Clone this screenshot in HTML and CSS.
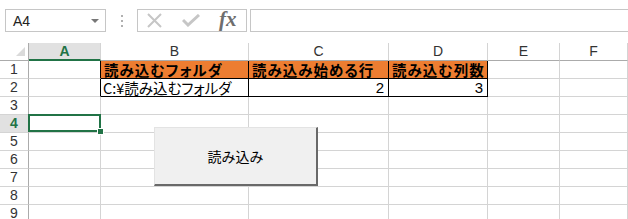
FILE: index.html
```html
<!DOCTYPE html>
<html>

<head>
    <title>Book1 - Excel</title>
    <meta name="viewport" content="width=device-width, initial-scale=1.0">
    <link rel="stylesheet" href="styles.css">
</head>

<body>
    <div class="toolbar">
        <div class="namebox">
            <span class="ref">A4</span>
            <span class="arrow"></span>
        </div>
        <div class="dots"><i></i><i></i><i></i></div>
        <div class="fxbox">
            <svg class="icon" width="17" height="15" viewBox="0 0 17 15">
                <path d="M2 1 L15 14 M15 1 L2 14" stroke="#c6c6c6" stroke-width="2" fill="none" />
            </svg>
            <svg class="icon" width="18" height="13" viewBox="0 0 18 13">
                <path d="M1 6 L6 11 L17 1" stroke="#c6c6c6" stroke-width="3" fill="none" />
            </svg>
            <span class="fx">fx</span>
        </div>
        <div class="formula"></div>
    </div>

    <div class="sheet">
        <div class="corner"></div>
        <div class="colhead active">A</div>
        <div class="colhead">B</div>
        <div class="colhead">C</div>
        <div class="colhead">D</div>
        <div class="colhead">E</div>
        <div class="colhead">F</div>

        <div class="rowhead">1</div>
        <div class="cell edge"></div>
        <div class="cell boxed title">読み込むフォルダ</div>
        <div class="cell boxed title">読み込み始める行</div>
        <div class="cell boxed title">読み込む列数</div>
        <div class="cell"></div>
        <div class="cell"></div>

        <div class="rowhead">2</div>
        <div class="cell edge"></div>
        <div class="cell boxed path">C:¥読み込むフォルダ</div>
        <div class="cell boxed num">2</div>
        <div class="cell boxed num">3</div>
        <div class="cell"></div>
        <div class="cell"></div>

        <div class="rowhead">3</div>
        <div class="cell"></div>
        <div class="cell"></div>
        <div class="cell"></div>
        <div class="cell"></div>
        <div class="cell"></div>
        <div class="cell"></div>

        <div class="rowhead active">4</div>
        <div class="cell selected"><span class="handle"></span></div>
        <div class="cell"></div>
        <div class="cell"></div>
        <div class="cell"></div>
        <div class="cell"></div>
        <div class="cell"></div>

        <div class="rowhead">5</div>
        <div class="cell"></div>
        <div class="cell"></div>
        <div class="cell"></div>
        <div class="cell"></div>
        <div class="cell"></div>
        <div class="cell"></div>

        <div class="rowhead">6</div>
        <div class="cell"></div>
        <div class="cell"></div>
        <div class="cell"></div>
        <div class="cell"></div>
        <div class="cell"></div>
        <div class="cell"></div>

        <div class="rowhead">7</div>
        <div class="cell"></div>
        <div class="cell"></div>
        <div class="cell"></div>
        <div class="cell"></div>
        <div class="cell"></div>
        <div class="cell"></div>

        <div class="rowhead">8</div>
        <div class="cell"></div>
        <div class="cell"></div>
        <div class="cell"></div>
        <div class="cell"></div>
        <div class="cell"></div>
        <div class="cell"></div>

        <div class="rowhead">9</div>
        <div class="cell"></div>
        <div class="cell"></div>
        <div class="cell"></div>
        <div class="cell"></div>
        <div class="cell"></div>
        <div class="cell"></div>

        <button class="load">読み込み</button>
    </div>
</body>

</html>
```

FILE: styles.css
```css
body {
    margin: 0;
    background-color: #fff;
    font-family: "Liberation Sans", "Noto Sans CJK JP", sans-serif;
    overflow: hidden;
}

.toolbar {
    display: flex;
    align-items: flex-start;
    height: 43px;
    padding-top: 9px;
    box-sizing: border-box;
}

.namebox {
    display: flex;
    align-items: center;
    justify-content: space-between;
    box-sizing: border-box;
    width: 101px;
    height: 23px;
    margin-left: 5px;
    padding: 0 6px 0 7px;
    border: 1px solid #c6c6c6;
}

.ref {
    font-size: 14px;
    color: #222;
}

.arrow {
    width: 0;
    height: 0;
    border-left: 4px solid transparent;
    border-right: 4px solid transparent;
    border-top: 4px solid #777;
}

.dots {
    display: flex;
    flex-direction: column;
    gap: 3px;
    width: 2px;
    margin: 6px 14px 0 15px;
}

.dots i {
    display: block;
    width: 2px;
    height: 2px;
    background-color: #b0b0b0;
}

.fxbox {
    display: flex;
    align-items: center;
    box-sizing: border-box;
    width: 110px;
    height: 23px;
    padding-left: 8px;
    border: 1px solid #c6c6c6;
}

.fxbox .icon {
    margin-right: 19px;
}

.fx {
    font-family: "Liberation Serif", serif;
    font-style: italic;
    font-weight: bold;
    font-size: 21px;
    color: #6e6e6e;
    margin-top: -2px;
}

.formula {
    flex: 1;
    height: 23px;
    margin-left: 3px;
    box-sizing: border-box;
    border: 1px solid #c6c6c6;
    border-right: none;
}

.sheet {
    position: relative;
    display: grid;
    grid-template-columns: 29px 72px 148px 140px 99px 72px 1fr;
    grid-auto-rows: 18px;
}

.sheet > div {
    box-sizing: border-box;
    border-right: 1px solid #d4d4d4;
    border-bottom: 1px solid #d4d4d4;
}

.corner {
    position: relative;
    border-right-color: #ababab !important;
    border-bottom-color: #ababab !important;
}

.corner::after {
    content: "";
    position: absolute;
    right: 3px;
    bottom: 4px;
    width: 0;
    height: 0;
    border-left: 9px solid transparent;
    border-bottom: 9px solid #dadada;
}

.colhead {
    text-align: center;
    font-size: 14px;
    line-height: 17px;
    color: #333;
    border-bottom-color: #ababab !important;
}

.colhead.active {
    background-color: #e1e1e1;
    color: #217346;
    font-weight: bold;
    border-bottom: 2px solid #217346 !important;
    line-height: 16px;
}

.rowhead {
    text-align: center;
    font-size: 14px;
    line-height: 17px;
    color: #333;
    border-right-color: #ababab !important;
}

.rowhead.active {
    background-color: #e1e1e1;
    color: #217346;
    font-weight: bold;
}

.cell {
    font-family: "Noto Sans CJK JP", sans-serif;
    font-size: 14.5px;
    line-height: 17px;
    color: #000;
    padding: 0 3px;
    white-space: nowrap;
}

.cell.edge {
    border-right-color: #000 !important;
}

.cell.boxed {
    border-right-color: #000 !important;
    border-bottom-color: #000 !important;
}

.cell.title {
    background-color: #ed7d31;
    font-weight: bold;
    font-feature-settings: "palt";
    letter-spacing: 1px;
}

.cell.path {
    font-feature-settings: "palt";
    padding-left: 2px;
}

.cell.num {
    font-family: "Liberation Sans", sans-serif;
    font-size: 15px;
    text-align: right;
    padding-right: 4px;
}

.cell.selected {
    position: relative;
}

.cell.selected::after {
    content: "";
    position: absolute;
    left: -1px;
    top: -1px;
    right: -1px;
    bottom: 0;
    border: 2px solid #217346;
}

.handle {
    position: absolute;
    right: -4px;
    bottom: -3px;
    width: 5px;
    height: 5px;
    background-color: #217346;
    border: 1px solid #fff;
    z-index: 1;
}

.load {
    position: absolute;
    left: 154px;
    top: 84px;
    width: 164px;
    height: 59px;
    box-sizing: border-box;
    margin: 0;
    padding: 0;
    background-color: #f0f0f0;
    border: none;
    border-top: 1px solid #e3e3e3;
    border-left: 1px solid #e3e3e3;
    border-right: 2px solid #696969;
    border-bottom: 2px solid #696969;
    font-family: "Noto Sans CJK JP", sans-serif;
    font-size: 14px;
    color: #000;
}
```
